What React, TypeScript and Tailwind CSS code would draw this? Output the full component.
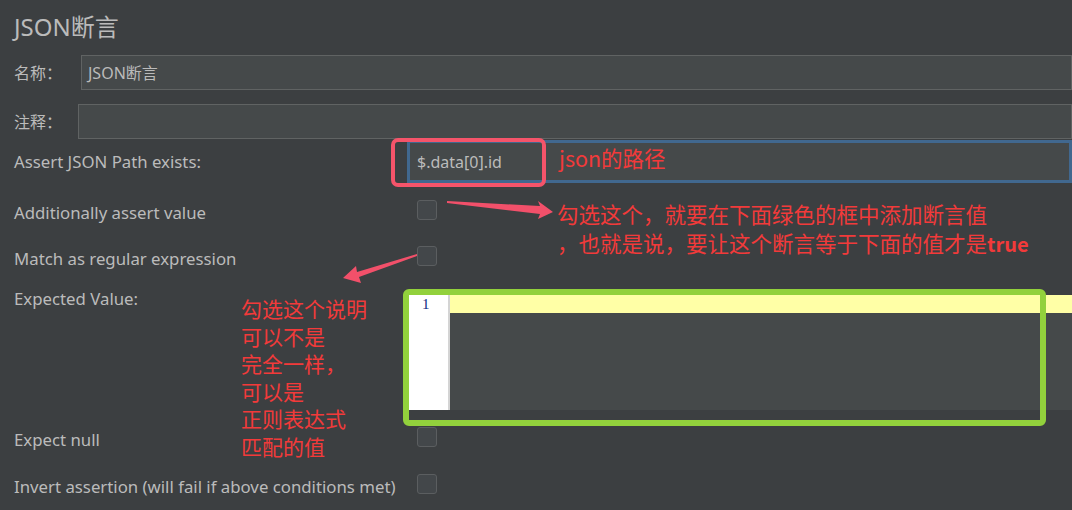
import React from "react";

const labelFont = { fontFamily: '"Noto Sans", "Noto Sans CJK SC", sans-serif' };

const Checkbox: React.FC = () => (
  <div className="ml-[10px] h-[20px] w-[20px] rounded-[3px] border border-[#5b5e60] bg-[#43474a]" />
);

const CheckRow: React.FC<{ label: string; className?: string }> = ({ label, className }) => (
  <div className={"flex h-[20px] items-center " + (className || "")}>
    <div className="w-[407px] pl-[14px] pt-[5px] text-[16.8px] text-[#bbbbbb]">{label}</div>
    <Checkbox />
  </div>
);

const Arrow: React.FC<{ points: string }> = ({ points }) => (
  <polygon points={points} fill="#f2506a" />
);

const App: React.FC = () => {
  return (
    <div
      className="relative h-[510px] w-[1072px] overflow-hidden bg-[#3c3f41] text-[#bbbbbb]"
      style={labelFont}
    >
      {/* Title */}
      <div className="h-[55px] pl-[14px] pt-[12px] text-[24px] leading-[30px]">JSON断言</div>

      {/* Name */}
      <div className="flex h-[35px] items-center">
        <div className="w-[81px] pl-[14px] text-[16px]">名称：</div>
        <div className="flex h-full flex-1 items-center border border-[#606363] bg-[#45494a] pl-[6px] text-[16px]">
          JSON断言
        </div>
      </div>

      {/* Comment */}
      <div className="mt-[14px] flex h-[35px] items-center">
        <div className="w-[78px] pl-[14px] text-[16px]">注释：</div>
        <div className="h-full flex-1 border border-[#606363] bg-[#45494a]" />
      </div>

      {/* JSON path */}
      <div className="mt-[1px] flex h-[43px] items-center">
        <div className="w-[407px] pl-[14px] text-[16.8px]">Assert JSON Path exists:</div>
        <div className="flex h-full flex-1 items-center border-[3px] border-[#41688f] bg-[#45494a] pl-[7px] text-[16px]">
          $.data[0].id
        </div>
      </div>

      <CheckRow label="Additionally assert value" className="mt-[17px]" />
      <CheckRow label="Match as regular expression" className="mt-[26px]" />

      {/* Expected value */}
      <div className="mt-[27px] flex">
        <div className="-mt-[6px] w-[407px] pl-[14px] text-[16.8px] leading-[24px]">Expected Value:</div>
        <div className="flex-1 pt-[2px]">
          <div className="flex h-[115px]">
            <div className="w-[43px] border-r-2 border-[#d4d4d4] bg-white pl-[15px] pt-[1px] text-[15px] leading-[16px] text-[#0f2a80]" style={{ fontFamily: '"Liberation Serif", serif' }}>
              1
            </div>
            <div className="flex-1 bg-[#45494a]">
              <div className="h-[18px] bg-[#ffffa6]" />
            </div>
          </div>
          <div className="h-[10px]" />
        </div>
      </div>

      <CheckRow label="Expect null" className="mt-[7px]" />
      <CheckRow label="Invert assertion (will fail if above conditions met)" className="mt-[27px]" />

      {/* Annotations */}
      <div className="absolute left-[391px] top-[138px] h-[49px] w-[155px] rounded-[7px] border-[4px] border-[#f5546a]" />
      <div className="absolute left-[403px] top-[289px] h-[137px] w-[643px] rounded-[6px] border-[6px] border-[#92d13c]" />

      <div
        className="absolute left-[559px] top-[144px] text-[21.5px] leading-[28px] text-[#f23a3a]"
        style={{ fontFamily: '"Noto Sans CJK SC", sans-serif' }}
      >
        json的路径
      </div>
      <div
        className="absolute left-[557px] top-[199px] text-[21.5px] leading-[29px] text-[#f23a3a]"
        style={{ fontFamily: '"Noto Sans CJK SC", sans-serif' }}
      >
        <div>勾选这个，就要在下面绿色的框中添加断言值</div>
        <div>
          ，也就是说，要让这个断言等于下面的值才是<span className="text-[20px] font-semibold">true</span>
        </div>
      </div>
      <div
        className="absolute left-[241px] top-[295px] text-[21px] leading-[27.5px] text-[#f23a3a]"
        style={{ fontFamily: '"Noto Sans CJK SC", sans-serif' }}
      >
        <div>勾选这个说明</div>
        <div>可以不是</div>
        <div>完全一样，</div>
        <div>可以是</div>
        <div>正则表达式</div>
        <div>匹配的值</div>
      </div>

      <svg className="pointer-events-none absolute left-0 top-0" width="1072" height="510">
        <Arrow points="447,201 540,206 538,201 553,212 538,219 540,214 447,203" />
        <Arrow points="417,254 357,272 356,266 343,278 361,283 359,277 417,256" />
      </svg>
    </div>
  );
};

export default App;
